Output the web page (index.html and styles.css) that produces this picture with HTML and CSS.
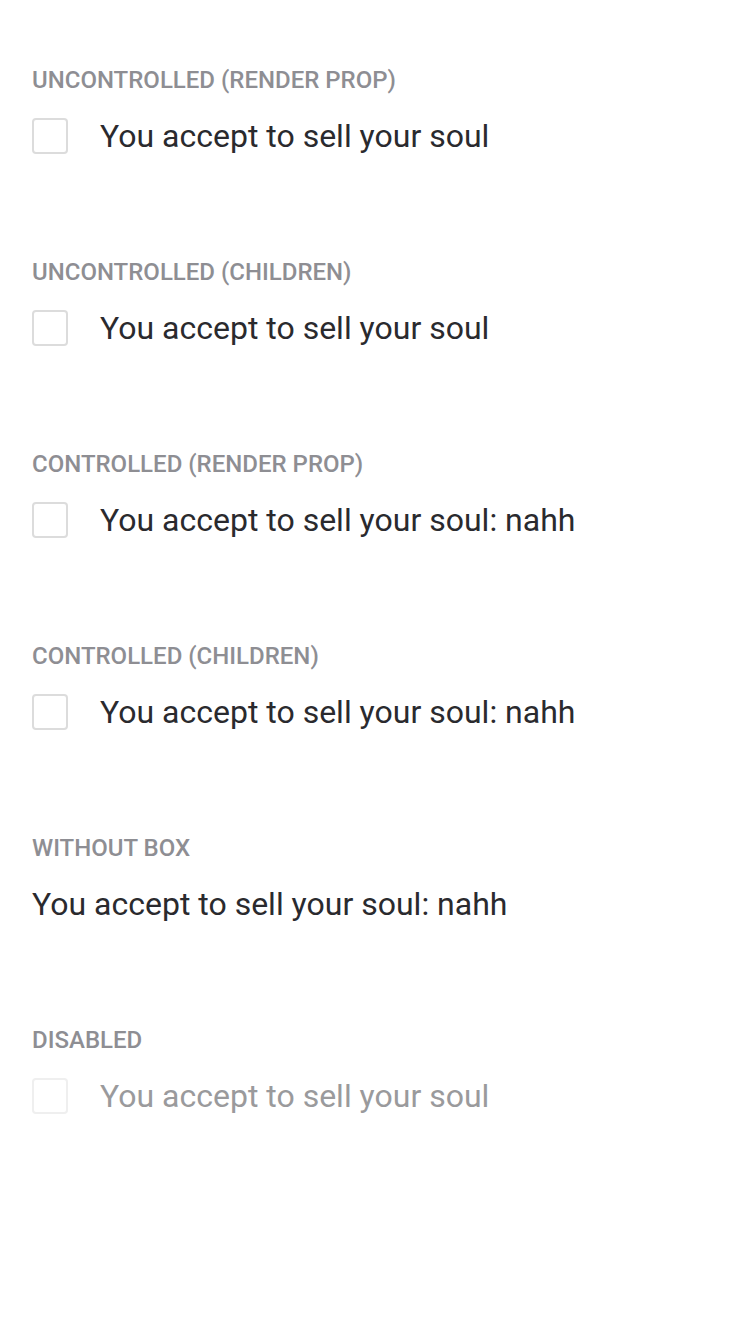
FILE: index.html
```html
<!DOCTYPE html>
<html>
<head>
<meta charset="utf-8">
<link rel="stylesheet" href="styles.css">
</head>
<body>
<main class="page">
  <section class="section">
    <h2 class="heading">Uncontrolled (render prop)</h2>
    <label class="row"><span class="box"></span><span class="label">You accept to sell your soul</span></label>
  </section>
  <section class="section">
    <h2 class="heading">Uncontrolled (children)</h2>
    <label class="row"><span class="box"></span><span class="label">You accept to sell your soul</span></label>
  </section>
  <section class="section">
    <h2 class="heading">Controlled (render prop)</h2>
    <label class="row"><span class="box"></span><span class="label">You accept to sell your soul: nahh</span></label>
  </section>
  <section class="section">
    <h2 class="heading">Controlled (children)</h2>
    <label class="row"><span class="box"></span><span class="label">You accept to sell your soul: nahh</span></label>
  </section>
  <section class="section">
    <h2 class="heading">Without box</h2>
    <label class="row"><span class="label">You accept to sell your soul: nahh</span></label>
  </section>
  <section class="section">
    <h2 class="heading">Disabled</h2>
    <label class="row disabled"><span class="box"></span><span class="label">You accept to sell your soul</span></label>
  </section>
</main>
</body>
</html>
```
FILE: styles.css
```css
html, body {
  margin: 0;
  padding: 0;
  background: #ffffff;
}
body {
  font-family: Roboto, "Liberation Sans", sans-serif;
}
.page {
  display: flex;
  flex-direction: column;
  gap: 106px;
  padding: 68px 32px 0 32px;
}
.section {
  display: flex;
  flex-direction: column;
  gap: 26px;
}
.heading {
  margin: 0;
  font-size: 24px;
  line-height: 24px;
  font-weight: 500;
  text-transform: uppercase;
  color: #8e8e93;
}
.row {
  display: flex;
  align-items: center;
  gap: 32px;
  height: 36px;
}
.box {
  box-sizing: border-box;
  width: 36px;
  height: 36px;
  border: 2px solid #dcdcdc;
  border-radius: 4px;
  flex: none;
}
.label {
  font-size: 32px;
  line-height: 34px;
  color: #2a2a2e;
}
.disabled .box {
  border-color: #efefef;
}
.disabled .label {
  color: #9a9a9c;
}
```
